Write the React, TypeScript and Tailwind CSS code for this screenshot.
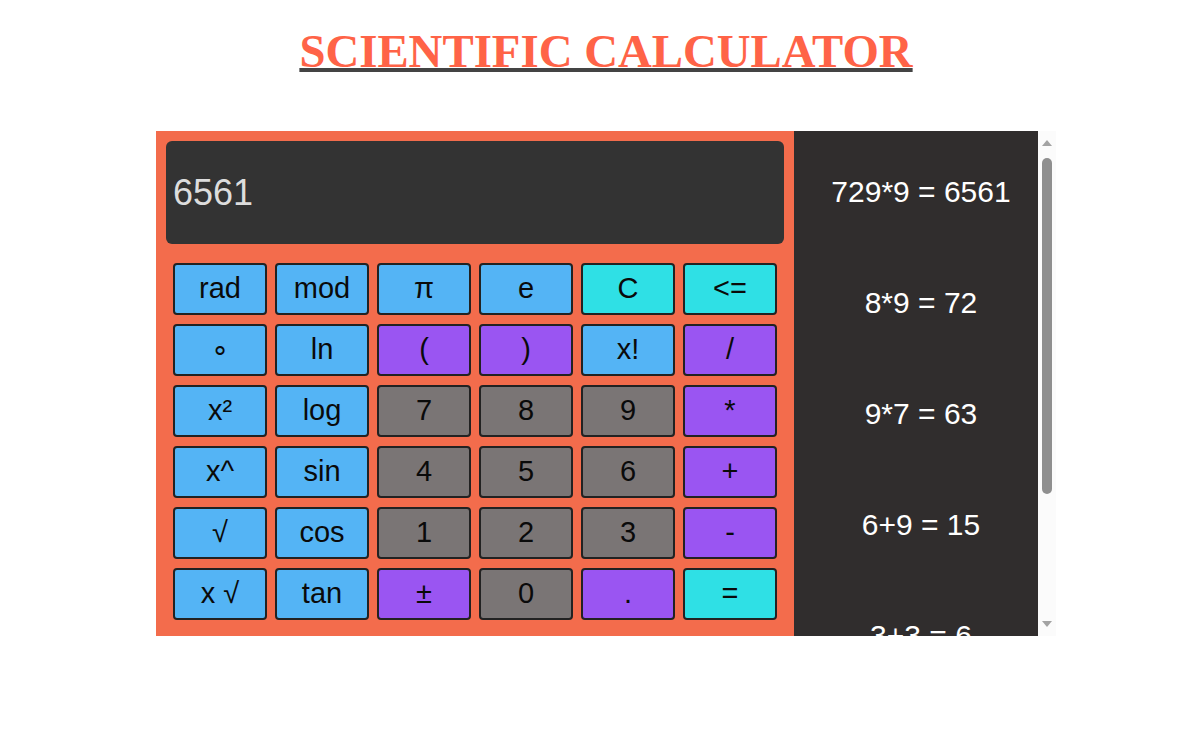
import React from "react";

type Key = { label: string; color: string };

const BLUE = "bg-[#54b4f5]";
const CYAN = "bg-[#2fe0e5]";
const PURPLE = "bg-[#9a55f2]";
const GRAY = "bg-[#7a7575]";

const keys: Key[] = [
  { label: "rad", color: BLUE },
  { label: "mod", color: BLUE },
  { label: "π", color: BLUE },
  { label: "e", color: BLUE },
  { label: "C", color: CYAN },
  { label: "<=", color: CYAN },

  { label: "∘", color: BLUE },
  { label: "ln", color: BLUE },
  { label: "(", color: PURPLE },
  { label: ")", color: PURPLE },
  { label: "x!", color: BLUE },
  { label: "/", color: PURPLE },

  { label: "x²", color: BLUE },
  { label: "log", color: BLUE },
  { label: "7", color: GRAY },
  { label: "8", color: GRAY },
  { label: "9", color: GRAY },
  { label: "*", color: PURPLE },

  { label: "x^", color: BLUE },
  { label: "sin", color: BLUE },
  { label: "4", color: GRAY },
  { label: "5", color: GRAY },
  { label: "6", color: GRAY },
  { label: "+", color: PURPLE },

  { label: "√", color: BLUE },
  { label: "cos", color: BLUE },
  { label: "1", color: GRAY },
  { label: "2", color: GRAY },
  { label: "3", color: GRAY },
  { label: "-", color: PURPLE },

  { label: "x √", color: BLUE },
  { label: "tan", color: BLUE },
  { label: "±", color: PURPLE },
  { label: "0", color: GRAY },
  { label: ".", color: PURPLE },
  { label: "=", color: CYAN },
];

const history = ["729*9 = 6561", "8*9 = 72", "9*7 = 63", "6+9 = 15", "3+3 = 6", "2+1 = 3"];

export default function App() {
  return (
    <div className="min-h-screen bg-white pl-[14px] font-['Liberation_Sans',Arial,sans-serif]">
      <h1 className="pt-[25px] text-center font-['Liberation_Serif','Times_New_Roman',serif] text-[46.8px] font-bold leading-[52px] text-[#ff6347] underline decoration-[#444] decoration-[4px] underline-offset-[1px]">
        SCIENTIFIC CALCULATOR
      </h1>

      <div className="mx-auto mt-[54px] flex h-[505px] w-[900px]">
        {/* calculator body */}
        <div className="w-[638px] bg-[#f36c4c] p-[10px]">
          <div className="flex h-[103px] items-center rounded-[6px] bg-[#333] pl-[7px] text-[36px] text-[#ddd]">
            6561
          </div>
          <div className="mt-[19px] grid grid-cols-6 gap-x-[8px] gap-y-[9px] px-[7px]">
            {keys.map((k) => (
              <button
                key={k.label}
                className={`${k.color} flex h-[52px] items-center justify-center rounded-[4px] border-2 border-[#222] text-[29px] text-[#0a0a0a]`}
              >
                {k.label}
              </button>
            ))}
          </div>
        </div>

        {/* history */}
        <div className="w-[244px] overflow-hidden bg-[#302d2d] pl-[10px] pt-[5px]">
          {history.map((h) => (
            <div key={h} className="flex h-[111px] items-center justify-center whitespace-nowrap text-[30px] text-white">
              {h}
            </div>
          ))}
        </div>

        {/* scrollbar */}
        <div className="flex w-[18px] flex-col items-center bg-[#fbfbfb] py-[9px]">
          <svg width="10" height="6" viewBox="0 0 10 6">
            <path d="M5 0 L10 6 L0 6 Z" fill="#a3a3a3" />
          </svg>
          <div className="mt-[12px] h-[336px] w-[10px] rounded-full bg-[#8f8f8f]" />
          <div className="flex-1" />
          <svg width="10" height="6" viewBox="0 0 10 6">
            <path d="M0 0 L10 0 L5 6 Z" fill="#a3a3a3" />
          </svg>
        </div>
      </div>
    </div>
  );
}
